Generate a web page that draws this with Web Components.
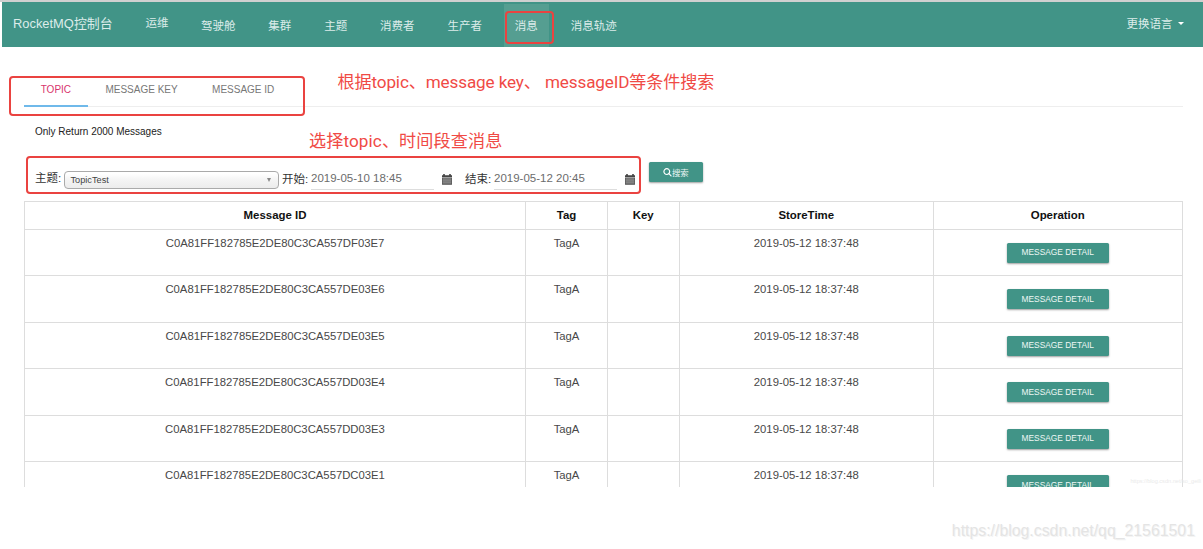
<!DOCTYPE html>
<html lang="zh-CN">
<head>
<meta charset="utf-8">
<title>RocketMQ控制台</title>
<style>
  body {
    margin: 0;
    background: #fff;
    font-family: "Liberation Sans", "Noto Sans CJK SC", sans-serif;
    font-size: 11.4px;
    color: #333;
    overflow: hidden;
  }
</style>
</head>
<body>
<console-app></console-app>

<script>
class NavItem extends HTMLElement {
  constructor() {
    super();
    this.attachShadow({mode: 'open'}).innerHTML = `
      <style>
        :host {
          display: flex;
          align-items: center;
          box-sizing: border-box;
          height: 43px;
          padding: 0 10.95px 1.5px;
          color: #dcecea;
          font-size: 11.5px;
          white-space: nowrap;
        }
        :host([active]) {
          background: #559e91;
        }
      </style>
      <slot></slot>
    `;
  }
}
customElements.define('nav-item', NavItem);

class NavBar extends HTMLElement {
  constructor() {
    super();
    this.attachShadow({mode: 'open'}).innerHTML = `
      <style>
        :host {
          display: block;
          padding-left: 2px;
          border-top: 2px solid #d0d0d0;
        }
        nav {
          display: flex;
          height: 45px;
          padding: 0 19.5px 0 11px;
          box-sizing: border-box;
          background: #419487;
          color: #dcecea;
        }
        .brand {
          width: 122px;
          line-height: 43px;
          font-size: 12.9px;
          white-space: nowrap;
        }
        .ops {
          width: 44.5px;
          padding-left: 10.5px;
          line-height: 43px;
          font-size: 11.5px;
        }
        .items {
          display: flex;
          gap: 11px;
          padding-top: 2px;
        }
        .lang {
          display: flex;
          align-items: center;
          gap: 5px;
          height: 42px;
          margin-left: auto;
          font-size: 11.5px;
        }
        .caret {
          border: 3px solid transparent;
          border-top-color: #fff;
          border-bottom: 0;
        }
      </style>
      <nav>
        <div class="brand">RocketMQ控制台</div>
        <div class="ops">运维</div>
        <div class="items"><slot></slot></div>
        <div class="lang">更换语言<span class="caret"></span></div>
      </nav>
    `;
  }
}
customElements.define('nav-bar', NavBar);

class TabItem extends HTMLElement {
  constructor() {
    super();
    this.attachShadow({mode: 'open'}).innerHTML = `
      <style>
        :host {
          display: block;
          box-sizing: border-box;
          height: 34px;
          padding: 0 17.2px;
          line-height: 34px;
          font-size: 10px;
          color: #777;
          white-space: nowrap;
        }
        :host([active]) {
          color: #d8336c;
          border-bottom: 2px solid #6fb9ea;
        }
      </style>
      <slot></slot>
    `;
  }
}
customElements.define('tab-item', TabItem);

class TabStrip extends HTMLElement {
  constructor() {
    super();
    this.attachShadow({mode: 'open'}).innerHTML = `
      <style>
        :host {
          display: flex;
          height: 34px;
          margin: 26px 20px 0 23.5px;
          background: linear-gradient(#eee, #eee) bottom / 100% 1.5px no-repeat;
        }
      </style>
      <slot></slot>
    `;
  }
}
customElements.define('tab-strip', TabStrip);

class RaisedButton extends HTMLElement {
  constructor() {
    super();
    this.attachShadow({mode: 'open'}).innerHTML = `
      <style>
        :host {
          display: flex;
          align-items: center;
          justify-content: center;
          box-sizing: border-box;
          width: 102px;
          height: 20px;
          border-radius: 1.5px;
          background: #419487;
          box-shadow: 0 1px 2px rgba(0, 0, 0, .38);
          color: #eef7f5;
          font-size: 8.4px;
          white-space: nowrap;
        }
      </style>
      <slot></slot>
    `;
  }
}
customElements.define('raised-button', RaisedButton);

class TopicSelect extends HTMLElement {
  constructor() {
    super();
    this.attachShadow({mode: 'open'}).innerHTML = `
      <style>
        :host {
          display: flex;
          align-items: center;
          justify-content: space-between;
          box-sizing: border-box;
          width: 215px;
          height: 18px;
          padding: 0 7px 0 5.5px;
          border: 1px solid #aaa;
          border-radius: 4px;
          background: linear-gradient(#fff 10%, #f4f4f4 50%, #ececec);
          font-size: 9.2px;
          color: #444;
        }
        i {
          border: 2.3px solid transparent;
          border-top: 4px solid #888;
          border-bottom: 0;
        }
      </style>
      <slot></slot><i></i>
    `;
  }
}
customElements.define('topic-select', TopicSelect);

class DateField extends HTMLElement {
  constructor() {
    super();
    this.attachShadow({mode: 'open'}).innerHTML = `
      <style>
        :host {
          display: flex;
          width: 142px;
          height: 20px;
        }
        .value {
          box-sizing: border-box;
          width: 123px;
          height: 20px;
          line-height: 17px;
          border-bottom: 1px solid #ddd;
          font-size: 11.5px;
          color: #6c6c6c;
          white-space: nowrap;
        }
        svg {
          margin: 4.4px 0 0 8.4px;
        }
      </style>
      <div class="value"><slot></slot></div>
      <svg width="10" height="11" viewBox="0 0 10 11">
        <path fill="#444" d="M0 1.2h1.2V0h1.6v1.2h4.4V0h1.6v1.2H10v2.2H0z"/>
        <path fill="#6d6d6d" d="M0 4h10v6.6H0z"/>
        <path stroke="#aaa" stroke-width=".35" d="M0 6.1h10M0 8.2h10M2 4v6.6M4 4v6.6M6 4v6.6M8 4v6.6"/>
        <path fill="none" stroke="#555" stroke-width=".7" d="M.35 4v6.3h9.3V4"/>
      </svg>
    `;
  }
}
customElements.define('date-field', DateField);

class SearchForm extends HTMLElement {
  constructor() {
    super();
    this.attachShadow({mode: 'open'}).innerHTML = `
      <style>
        :host {
          display: block;
          padding-left: 35px;
        }
        p {
          margin: 0;
          padding-top: 18px;
          height: 13px;
          line-height: 14px;
          font-size: 10px;
          color: #222;
        }
        .row {
          display: flex;
          align-items: flex-start;
          height: 39px;
          margin-top: 24px;
        }
        label {
          padding-top: 8px;
          line-height: 18px;
          font-size: 11.5px;
          color: #333;
          white-space: nowrap;
        }
        .topic { width: 29px; padding-top: 7px; }
        .date { width: 29px; }
        topic-select { margin: 9px 3px 0 0; }
        date-field { margin-top: 8px; }
        .end { margin-left: 12px; }
        raised-button {
          width: 54.5px;
          margin-left: 12.5px;
          font-size: 8.4px;
        }
      </style>
      <p>Only Return 2000 Messages</p>
      <div class="row">
        <label class="topic">主题:</label>
        <topic-select>TopicTest</topic-select>
        <label class="date">开始:</label>
        <date-field>2019-05-10 18:45</date-field>
        <label class="date end">结束:</label>
        <date-field>2019-05-12 20:45</date-field>
        <raised-button>
          <svg width="9" height="9" viewBox="0 0 9 9" fill="none" stroke="#fff" stroke-width="1.2">
            <circle cx="3.8" cy="3.6" r="2.9"/>
            <path stroke-linecap="round" d="M5.9 5.7L8.1 7.9"/>
          </svg>搜索
        </raised-button>
      </div>
    `;
  }
}
customElements.define('search-form', SearchForm);

class MessageTable extends HTMLElement {
  constructor() {
    super();
    this.attachShadow({mode: 'open'});
  }

  connectedCallback() {
    const ids = this.getAttribute('ids').split(' ');
    const rows = ids.map(id => `
      <div class="row">
        <div>${id}</div>
        <div>TagA</div>
        <div></div>
        <div>2019-05-12 18:37:48</div>
        <div><raised-button>MESSAGE DETAIL</raised-button></div>
      </div>
    `).join('');

    this.shadowRoot.innerHTML = `
      <style>
        :host {
          display: block;
          box-sizing: border-box;
          width: 1158.5px;
          height: 286px;
          margin-left: 24px;
          border: 1px solid #ddd;
          border-width: 1px 1px 0 0;
          overflow: hidden;
        }
        .row {
          display: grid;
          grid-template-columns: 501px 82px 71.5px 254.5px 1fr;
          height: 46.55px;
          box-sizing: border-box;
          border-bottom: 1px solid #ddd;
          line-height: 27px;
          font-size: 11.3px;
          text-align: center;
          color: #484848;
        }
        .row > div {
          border-left: 1px solid #ddd;
        }
        .head {
          height: 27.5px;
          line-height: 27px;
          font-size: 11.45px;
          font-weight: bold;
          color: #111;
        }
        raised-button {
          margin: 13px auto 0;
        }
      </style>
      <div class="row head">
        <div>Message ID</div>
        <div>Tag</div>
        <div>Key</div>
        <div>StoreTime</div>
        <div>Operation</div>
      </div>
      ${rows}
    `;
  }
}
customElements.define('message-table', MessageTable);

// red frame or red note drawn over the page
class MarkUp extends HTMLElement {
  constructor() {
    super();
    this.attachShadow({mode: 'open'}).innerHTML = `
      <style>
        :host {
          position: absolute;
          box-sizing: border-box;
          color: #f04a45;
          font-family: Roboto, "Noto Sans CJK SC", sans-serif;
          font-size: 17.1px;
          line-height: 24px;
          white-space: nowrap;
        }
        :host([frame]) {
          border: 2px solid #ea4340;
          border-radius: 4px;
        }
      </style>
      <slot></slot>
    `;
  }
}
customElements.define('mark-up', MarkUp);

class ConsoleApp extends HTMLElement {
  constructor() {
    super();
    this.attachShadow({mode: 'open'}).innerHTML = `
      <style>
        :host {
          display: block;
          position: relative;
          width: 1203px;
          height: 549px;
          overflow: hidden;
        }
        .menu-frame { left: 505px; top: 11px; width: 49px; height: 33px; }
        .tab-frame { left: 9px; top: 76px; width: 296px; height: 40px; }
        .form-frame { left: 26px; top: 156px; width: 615px; height: 38px; }
        .tab-note { left: 337.5px; top: 70px; letter-spacing: -.12px; }
        .form-note { left: 309px; top: 129px; letter-spacing: .12px; }
        .mark {
          position: absolute;
          right: 8px;
          top: 521px;
          font-size: 15.85px;
          line-height: 20px;
          color: #e4e4e4;
          text-shadow: 1px 1px 0 #f4f4f4;
        }
        .mark.small {
          right: 2px;
          top: 476px;
          font-size: 5.6px;
          line-height: 10px;
          color: #eaeaea;
          text-shadow: none;
        }
      </style>
      <nav-bar>
        <nav-item>驾驶舱</nav-item>
        <nav-item>集群</nav-item>
        <nav-item>主题</nav-item>
        <nav-item>消费者</nav-item>
        <nav-item>生产者</nav-item>
        <nav-item active>消息</nav-item>
        <nav-item>消息轨迹</nav-item>
      </nav-bar>
      <tab-strip>
        <tab-item active>TOPIC</tab-item>
        <tab-item>MESSAGE KEY</tab-item>
        <tab-item>MESSAGE ID</tab-item>
      </tab-strip>
      <search-form></search-form>
      <message-table ids="C0A81FF182785E2DE80C3CA557DF03E7 C0A81FF182785E2DE80C3CA557DE03E6 C0A81FF182785E2DE80C3CA557DE03E5 C0A81FF182785E2DE80C3CA557DD03E4 C0A81FF182785E2DE80C3CA557DD03E3 C0A81FF182785E2DE80C3CA557DC03E1"></message-table>
      <mark-up frame class="menu-frame"></mark-up>
      <mark-up frame class="tab-frame"></mark-up>
      <mark-up frame class="form-frame"></mark-up>
      <mark-up class="tab-note">根据topic、message key、 messageID等条件搜索</mark-up>
      <mark-up class="form-note">选择topic、时间段查消息</mark-up>
      <div class="mark small">https://blog.csdn.net/so_geili</div>
      <div class="mark">https://blog.csdn.net/qq_21561501</div>
    `;
  }
}
customElements.define('console-app', ConsoleApp);
</script>
</body>
</html>
